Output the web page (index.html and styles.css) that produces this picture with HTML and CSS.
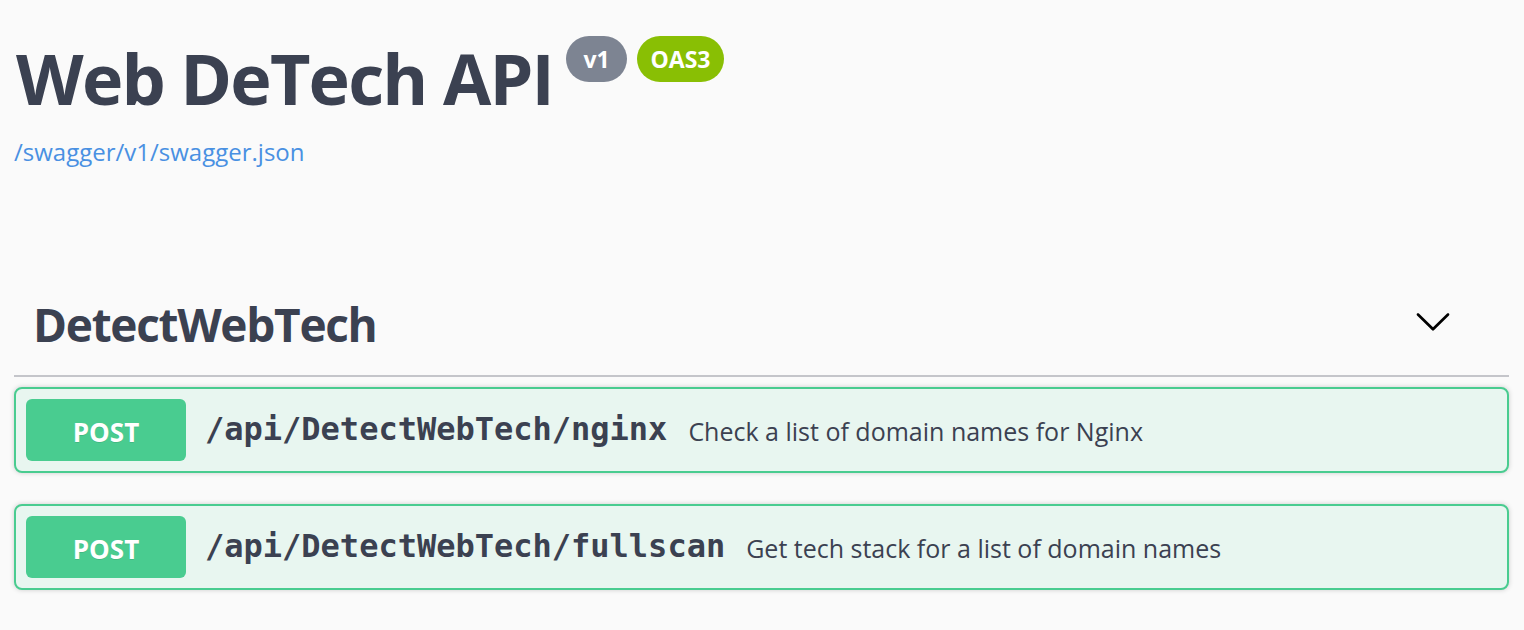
FILE: index.html
```html
<!DOCTYPE html>
<html lang="en">
<head>
<meta charset="utf-8">
<title>Web DeTech API</title>
<link rel="stylesheet" href="styles.css">
</head>
<body>
<div class="wrapper">
  <section class="info">
    <div class="title-row">
      <h1 class="title">Web DeTech API</h1>
      <span class="badge badge-version">v1</span>
      <span class="badge badge-oas">OAS3</span>
    </div>
    <a class="spec-link" href="#">/swagger/v1/swagger.json</a>
  </section>

  <section class="tag-section">
    <div class="tag-header">
      <h2 class="tag-name">DetectWebTech</h2>
      <button class="expand" aria-label="collapse">
        <svg class="chevron" viewBox="0 0 20 20" width="38" height="38" aria-hidden="true">
          <path d="M17.418 6.109c.272-.268.709-.268.979 0s.271.701 0 .969l-7.908 7.830c-.27.268-.707.268-.979 0l-7.908-7.830c-.27-.268-.27-.701 0-.969.271-.268.709-.268.979 0L10 13.250l7.418-7.141z"/>
        </svg>
      </button>
    </div>

    <div class="opblock">
      <span class="method">POST</span>
      <span class="path">/api/DetectWebTech/nginx</span>
      <span class="desc">Check a list of domain names for Nginx</span>
    </div>

    <div class="opblock">
      <span class="method">POST</span>
      <span class="path">/api/DetectWebTech/fullscan</span>
      <span class="desc">Get tech stack for a list of domain names</span>
    </div>
  </section>
</div>
</body>
</html>
```

FILE: styles.css
```css
* {
  box-sizing: border-box;
}

html, body {
  margin: 0;
  padding: 0;
  background: #fafafa;
}

body {
  font-family: "Open Sans", "Noto Sans", sans-serif;
  color: #3b4151;
}

.wrapper {
  padding: 0 15px 0 14px;
}

.info {
  display: flex;
  flex-direction: column;
  align-items: flex-start;
}

.title-row {
  display: flex;
  align-items: flex-start;
  padding-top: 36px;
}

.title {
  margin: 7px 0 0 2px;
  font-size: 70px;
  line-height: 70px;
  font-weight: 700;
  letter-spacing: -1.8px;
  color: #3b4151;
}

.badge {
  height: 46px;
  display: flex;
  align-items: center;
  justify-content: center;
  border-radius: 57px;
  color: #fff;
  font-weight: 700;
  font-size: 23px;
  padding: 0 9px;
}

.badge-version {
  margin-left: 13px;
  width: 61px;
  background: #7d8492;
}

.badge-oas {
  margin-left: 10px;
  width: 87px;
  background: #89bf04;
}

.spec-link {
  margin-top: 24px;
  font-size: 24px;
  line-height: 30px;
  color: #4990e2;
  text-decoration: none;
}

.tag-section {
  margin-top: 126px;
}

.tag-header {
  display: flex;
  align-items: center;
  justify-content: space-between;
  padding: 0 57px 20px 19px;
  border-bottom: 2px solid #c4c5ca;
}

.tag-name {
  margin: 0;
  font-size: 46px;
  line-height: 62px;
  font-weight: 700;
  letter-spacing: -1.3px;
  color: #3b4151;
}

.expand {
  border: none;
  background: none;
  padding: 0;
  width: 38px;
  height: 38px;
  margin-top: -7px;
  cursor: pointer;
}

.chevron {
  display: block;
  fill: #000;
}

.opblock {
  display: flex;
  align-items: center;
  margin-top: 10px;
  margin-bottom: 31px;
  padding: 10px;
  border: 2px solid #49cc90;
  border-radius: 8px;
  background: #e8f6f0;
  box-shadow: 0 0 5px rgba(0, 0, 0, 0.19);
}

.opblock + .opblock {
  margin-top: 0;
}

.method {
  flex: none;
  width: 160px;
  height: 62px;
  display: flex;
  align-items: center;
  justify-content: center;
  padding-top: 4px;
  border-radius: 6px;
  background: #49cc90;
  color: #fff;
  font-size: 26px;
  font-weight: 700;
  text-shadow: 0 1px 0 rgba(0, 0, 0, 0.1);
}

.path {
  margin-left: 19px;
  margin-bottom: 2px;
  font-family: "DejaVu Sans Mono", monospace;
  font-size: 32px;
  font-weight: 700;
  color: #3b4151;
}

.desc {
  margin-left: 21px;
  margin-top: 2px;
  font-size: 25px;
  color: #3b4151;
}
```
